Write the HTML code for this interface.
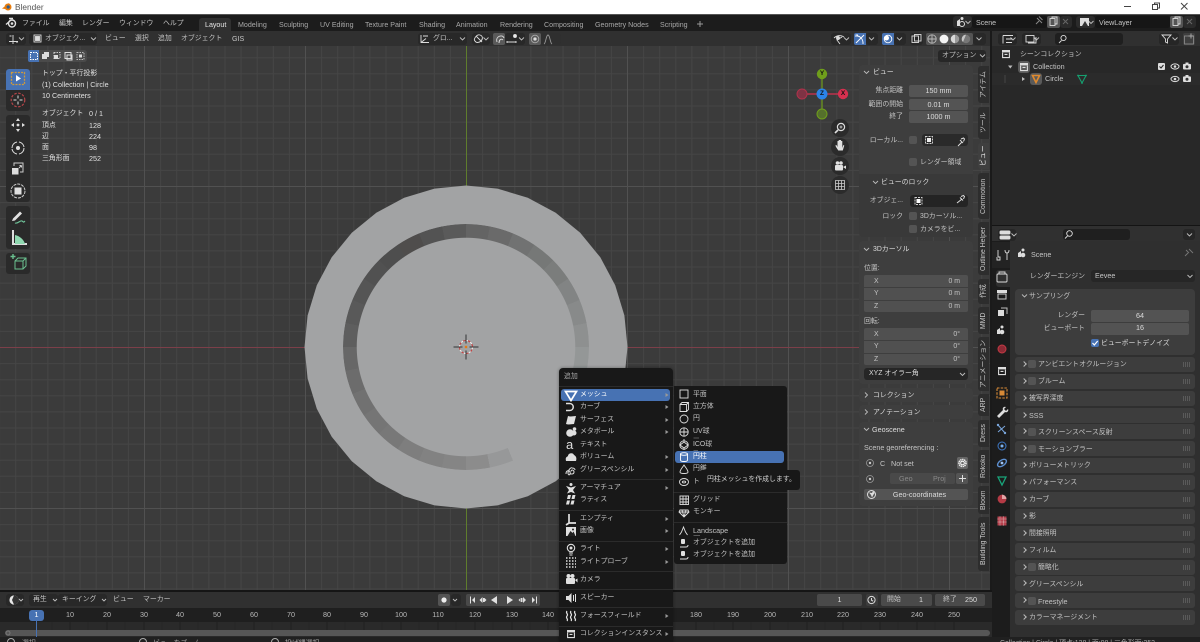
<!DOCTYPE html>
<html lang="ja"><head><meta charset="utf-8"><title>Blender</title>
<style>
html,body{margin:0;padding:0;background:#1a1a1a}
#a{position:relative;width:1200px;height:642px;overflow:hidden;background:#1a1a1a;font:6.9px/12px "Liberation Sans","Noto Sans CJK JP",sans-serif;color:#c4c4c4;filter:blur(.35px)}
#a p{position:absolute;margin:1px 0 0;white-space:nowrap;line-height:12px}
#a i{position:absolute;display:block;font-style:normal}
svg{position:absolute;left:0;top:0}
.w{background:#282828;border-radius:3px}
.f{background:#545454;border-radius:2px}
.h{background:#3e3e3e;border-radius:4px}
.b{background:#2a2a2a;border-radius:3px}
.c{background:#545454;border-radius:2px;width:8px;height:8px}
.g{color:#a8a8a8}
#a p.v{margin:0;writing-mode:vertical-rl;text-orientation:sideways;transform:rotate(180deg);text-align:center;line-height:11px;width:11px;color:#c8c8c8}
.tab{background:#2d2d2d;left:978px;width:11px;border-radius:3px 0 0 3px}
.p{left:1015px;width:180px;height:15px;background:#3d3d3d;border-radius:3px}
.p:before{content:"";position:absolute;left:7px;top:5px;width:3px;height:3px;border-top:1px solid #bbb;border-right:1px solid #bbb;transform:rotate(45deg)}
.p:after{content:"";position:absolute;right:4px;top:5px;width:8px;height:5px;background:repeating-linear-gradient(90deg,#5a5a5a 0 1px,transparent 1px 2px)}
.s{left:559px;width:114px;height:1px;background:#2b2b2b}
.n{text-align:center;width:24px;color:#b8b8b8}
</style></head><body><div id="a">

<svg width="1200" height="642">
<defs><pattern id="gr" x="144" y="25" width="161" height="161" patternUnits="userSpaceOnUse">
<path d="M16.6 0V161M32.7 0V161M48.8 0V161M64.9 0V161M81 0V161M97.1 0V161M113.2 0V161M129.3 0V161M145.4 0V161M0 16.6H161M0 32.7H161M0 48.8H161M0 64.9H161M0 81H161M0 97.1H161M0 113.2H161M0 129.3H161M0 145.4H161" stroke="#454545" stroke-width="1" fill="none"/>
<path d="M.5 0V161M0 .5H161" stroke="#515151" stroke-width="1" fill="none"/></pattern></defs>
<rect x="0" y="31" width="990" height="560" fill="#3b3b3b"/>
<rect x="0" y="46" width="990" height="545" fill="url(#gr)"/>
<path d="M0 347.5H860" stroke="#7c3f49" stroke-width="1"/>
<path d="M466.5 46V591" stroke="#5f7d2d" stroke-width="1"/>
<polygon fill="#a2a3a4" points="466,185.5 497.5,188.6 527.8,197.8 555.7,212.7 580.2,232.8 600.3,257.3 615.2,285.2 624.4,315.5 627.5,347 624.4,378.5 615.2,408.8 600.3,436.7 580.2,461.2 555.7,481.3 527.8,496.2 497.5,505.4 466,508.5 434.5,505.4 404.2,496.2 376.3,481.3 351.8,461.2 331.7,436.7 316.8,408.8 307.6,378.5 304.5,347 307.6,315.5 316.8,285.2 331.7,257.3 351.8,232.8 376.3,212.7 404.2,197.8 434.5,188.6"/>
</svg>
<i style="left:343px;top:224px;width:246px;height:246px;border-radius:50%;background:conic-gradient(#646464 0 11.25deg,#6a6a6a 0 22.5deg,#717272 0 33.75deg,#767877 0 45deg,#7b7d7c 0 56.25deg,#828484 0 67.5deg,#888a8a 0 78.75deg,#8e9090 0 90deg,#949797 0 101.25deg,#9a9d9d 0 112.5deg,#a0a2a3 0 123.75deg,#a2a3a4 0 157.5deg,#979899 0 168.75deg,#8c8c8c 0 180deg,#858585 0 191.25deg,#828282 0 202.5deg,#7e7e7e 0 213.75deg,#787878 0 225deg,#757575 0 236.25deg,#717171 0 247.5deg,#6c6c6c 0 258.75deg,#676767 0 270deg,#5e5e5e 0 281.25deg,#595959 0 292.5deg,#555 0 303.75deg,#515151 0 315deg,#4e4e4e 0 326.25deg,#4f4d4c 0 337.5deg,#535353 0 348.75deg,#5a5a5a 0 360deg);-webkit-mask:radial-gradient(circle,transparent 109px,#000 109.5px);mask:radial-gradient(circle,transparent 109px,#000 109.5px)"></i>

<!-- title bar -->
<i style="left:0;top:0;width:1200px;height:14px;background:#fff"></i>
<i style="left:0;top:14px;width:1200px;height:1px;background:#555"></i>
<p style="left:15px;top:0;font-size:8.3px;color:#555">Blender</p>
<!-- top bar -->
<i style="left:0;top:15px;width:1200px;height:16px;background:#1c1c1c"></i>
<i style="left:199px;top:18px;width:32px;height:13px;background:#303030;border-radius:3px 3px 0 0"></i>
<p style="left:22px;top:17px">ファイル</p><p style="left:59px;top:17px">編集</p><p style="left:82px;top:17px">レンダー</p><p style="left:119px;top:17px">ウィンドウ</p><p style="left:163px;top:17px">ヘルプ</p>
<p style="left:205px;top:18px;color:#e6e6e6;font-size:7.1px">Layout</p>
<p class="g" style="left:238px;top:18px;font-size:7.1px">Modeling</p><p class="g" style="left:279px;top:18px;font-size:7.1px">Sculpting</p><p class="g" style="left:320px;top:18px;font-size:7.1px">UV Editing</p><p class="g" style="left:365px;top:18px;font-size:7.1px">Texture Paint</p><p class="g" style="left:419px;top:18px;font-size:7.1px">Shading</p><p class="g" style="left:456px;top:18px;font-size:7.1px">Animation</p><p class="g" style="left:500px;top:18px;font-size:7.1px">Rendering</p><p class="g" style="left:544px;top:18px;font-size:7.1px">Compositing</p><p class="g" style="left:595px;top:18px;font-size:7.1px">Geometry Nodes</p><p class="g" style="left:660px;top:18px;font-size:7.1px">Scripting</p>

<i class="w" style="left:953px;top:16px;width:19px;height:12px;background:#2b2b2b"></i>
<i class="w" style="left:972px;top:16px;width:75px;height:12px;background:#161616"></i>
<i class="f" style="left:1047px;top:16px;width:13px;height:12px"></i><i class="w" style="left:1060px;top:16px;width:12px;height:12px;background:#2b2b2b"></i>
<p style="left:976px;top:16px;font-size:7.1px">Scene</p>
<i class="w" style="left:1076px;top:16px;width:19px;height:12px;background:#2b2b2b"></i>
<i class="w" style="left:1095px;top:16px;width:75px;height:12px;background:#161616"></i>
<i class="f" style="left:1170px;top:16px;width:13px;height:12px"></i><i class="w" style="left:1183px;top:16px;width:13px;height:12px;background:#2b2b2b"></i>
<p style="left:1099px;top:16px;font-size:7.1px">ViewLayer</p>

<!-- viewport header -->
<i style="left:0;top:31px;width:990px;height:15px;background:#303030"></i>
<i class="w" style="left:6px;top:33px;width:20px;height:12px"></i>
<i class="w" style="left:29px;top:33px;width:68px;height:12px"></i>
<p style="left:45px;top:32px">オブジェク...</p>
<p style="left:105px;top:32px">ビュー</p><p style="left:135px;top:32px">選択</p><p style="left:158px;top:32px">追加</p><p style="left:181px;top:32px">オブジェクト</p><p style="left:232px;top:32px;font-size:7.1px">GIS</p>
<i class="w" style="left:418px;top:33px;width:49px;height:12px"></i><p style="left:433px;top:32px">グロ...</p>
<i class="w" style="left:472px;top:33px;width:18px;height:12px"></i>
<i class="f" style="left:493px;top:33px;width:12px;height:12px;background:#5a5a5a"></i><i class="w" style="left:505px;top:33px;width:20px;height:12px"></i>
<i class="f" style="left:529px;top:33px;width:12px;height:12px;background:#5a5a5a"></i><i class="w" style="left:541px;top:33px;width:20px;height:12px;background:#2f2f2f"></i>
<i class="w" style="left:831px;top:33px;width:20px;height:12px"></i>
<i style="left:854px;top:33px;width:12px;height:12px;background:#4772b3;border-radius:2px 0 0 2px"></i><i class="w" style="left:866px;top:33px;width:12px;height:12px"></i>
<i style="left:882px;top:33px;width:12px;height:12px;background:#4772b3;border-radius:2px 0 0 2px"></i><i class="w" style="left:894px;top:33px;width:12px;height:12px"></i>
<i class="w" style="left:910px;top:33px;width:13px;height:12px"></i>
<i class="f" style="left:926px;top:33px;width:47px;height:12px"></i>
<i class="w" style="left:973px;top:33px;width:13px;height:12px"></i>
<i class="w" style="left:938px;top:50px;width:48px;height:12px;background:#272727"></i>
<p style="left:942px;top:49px">オプション</p>

<!-- tool settings -->
<i class="b" style="left:28px;top:50px;width:59px;height:12px;background:#4a4a4a"></i>
<i style="left:28px;top:50px;width:11px;height:12px;background:#4772b3;border-radius:2px 0 0 2px"></i>

<!-- toolbar -->
<i class="b" style="left:6px;top:69px;width:24px;height:42px"></i>
<i style="left:6px;top:69px;width:24px;height:21px;background:#4772b3;border-radius:3px 3px 0 0"></i>
<i class="b" style="left:6px;top:115px;width:24px;height:87px"></i>
<i class="b" style="left:6px;top:206px;width:24px;height:43px"></i>
<i class="b" style="left:6px;top:253px;width:24px;height:21px"></i>

<!-- stats -->
<p style="left:42px;top:67px;color:#e0e0e0">トップ・平行投影</p>
<p style="left:42px;top:78px;color:#e0e0e0;font-size:7.2px">(1) Collection | Circle</p>
<p style="left:42px;top:89px;color:#e0e0e0;font-size:7.2px">10 Centimeters</p>
<p style="left:42px;top:107px;color:#e0e0e0">オブジェクト</p><p style="left:89px;top:107px;color:#e0e0e0;font-size:7.2px">0 / 1</p>
<p style="left:42px;top:119px;color:#e0e0e0">頂点</p><p style="left:89px;top:119px;color:#e0e0e0;font-size:7.2px">128</p>
<p style="left:42px;top:130px;color:#e0e0e0">辺</p><p style="left:89px;top:130px;color:#e0e0e0;font-size:7.2px">224</p>
<p style="left:42px;top:141px;color:#e0e0e0">面</p><p style="left:89px;top:141px;color:#e0e0e0;font-size:7.2px">98</p>
<p style="left:42px;top:152px;color:#e0e0e0">三角形面</p><p style="left:89px;top:152px;color:#e0e0e0;font-size:7.2px">252</p>

<!-- sidebar tabs -->
<i class="tab" style="top:66px;height:37px"></i><p class="v" style="left:978px;top:66px;height:37px">アイテム</p>
<i class="tab" style="top:107px;height:32px"></i><p class="v" style="left:978px;top:107px;height:32px">ツール</p>
<i class="tab" style="top:143px;height:26px;background:#3f3f3f"></i><p class="v" style="left:978px;top:143px;height:26px;color:#eee">ビュー</p>
<i class="tab" style="top:173px;height:46px"></i><p class="v" style="left:978px;top:173px;height:46px">Commotion</p>
<i class="tab" style="top:222px;height:53px"></i><p class="v" style="left:978px;top:222px;height:53px">Outline Helper</p>
<i class="tab" style="top:279px;height:25px"></i><p class="v" style="left:978px;top:279px;height:25px">作成</p>
<i class="tab" style="top:307px;height:27px"></i><p class="v" style="left:978px;top:307px;height:27px">MMD</p>
<i class="tab" style="top:337px;height:54px"></i><p class="v" style="left:978px;top:337px;height:54px">アニメーション</p>
<i class="tab" style="top:394px;height:22px"></i><p class="v" style="left:978px;top:394px;height:22px">ARP</p>
<i class="tab" style="top:420px;height:27px"></i><p class="v" style="left:978px;top:420px;height:27px">Dress</p>
<i class="tab" style="top:450px;height:33px"></i><p class="v" style="left:978px;top:450px;height:33px">Rokoko</p>
<i class="tab" style="top:486px;height:28px"></i><p class="v" style="left:978px;top:486px;height:28px">Bloom</p>
<i class="tab" style="top:517px;height:54px"></i><p class="v" style="left:978px;top:517px;height:54px">Building Tools</p>

<!-- sidebar panels -->
<i class="h" style="left:859px;top:65px;width:114px;height:172px"></i>
<i style="left:859px;top:174px;width:114px;height:63px;background:#393939;border-radius:0 0 4px 4px"></i>
<i class="h" style="left:859px;top:241px;width:114px;height:143px"></i>
<i class="h" style="left:859px;top:388px;width:114px;height:14px"></i>
<i class="h" style="left:859px;top:405px;width:114px;height:14px"></i>
<i class="h" style="left:859px;top:422px;width:114px;height:84px"></i>

<p style="left:873px;top:66px;color:#ddd">ビュー</p>
<p style="right:297px;top:84px">焦点距離</p><i class="f" style="left:909px;top:85px;width:59px;height:12px"></i><p style="left:909px;top:84px;width:59px;text-align:center;font-size:7.2px;color:#ddd">150 mm</p>
<p style="right:297px;top:98px">範囲の開始</p><i class="f" style="left:909px;top:99px;width:59px;height:11px"></i><p style="left:909px;top:98px;width:59px;text-align:center;font-size:7.2px;color:#ddd">0.01 m</p>
<p style="right:297px;top:110px">終了</p><i class="f" style="left:909px;top:111px;width:59px;height:12px"></i><p style="left:909px;top:110px;width:59px;text-align:center;font-size:7.2px;color:#ddd">1000 m</p>
<p style="right:297px;top:134px">ローカル...</p><i class="c" style="left:909px;top:136px"></i><i class="w" style="left:922px;top:134px;width:46px;height:12px;background:#2a2a2a"></i>
<i class="c" style="left:909px;top:158px"></i><p style="left:920px;top:156px">レンダー領域</p>
<p style="left:881px;top:176px;color:#ddd">ビューのロック</p>
<p style="right:297px;top:194px">オブジェ...</p><i class="w" style="left:910px;top:195px;width:58px;height:12px;background:#242424"></i>
<p style="right:297px;top:210px">ロック</p><i class="c" style="left:909px;top:212px"></i><p style="left:920px;top:210px">3Dカーソル...</p>
<i class="c" style="left:909px;top:225px"></i><p style="left:920px;top:223px">カメラをビ...</p>
<p style="left:873px;top:243px;color:#ddd">3Dカーソル</p>
<p style="left:864px;top:262px">位置:</p>
<i class="f" style="left:864px;top:275px;width:104px;height:37px;background:#505050"></i>
<i style="left:864px;top:287px;width:104px;height:1px;background:#3e3e3e"></i><i style="left:864px;top:300px;width:104px;height:1px;background:#3e3e3e"></i>
<p style="left:874px;top:275px">X</p><p style="right:240px;top:275px">0 m</p><p style="left:874px;top:287px">Y</p><p style="right:240px;top:287px">0 m</p><p style="left:874px;top:300px">Z</p><p style="right:240px;top:300px">0 m</p>
<p style="left:864px;top:315px">回転:</p>
<i class="f" style="left:864px;top:328px;width:104px;height:37px;background:#505050"></i>
<i style="left:864px;top:340px;width:104px;height:1px;background:#3e3e3e"></i><i style="left:864px;top:353px;width:104px;height:1px;background:#3e3e3e"></i>
<p style="left:874px;top:328px">X</p><p style="right:240px;top:328px">0°</p><p style="left:874px;top:340px">Y</p><p style="right:240px;top:340px">0°</p><p style="left:874px;top:353px">Z</p><p style="right:240px;top:353px">0°</p>
<i class="w" style="left:864px;top:368px;width:104px;height:12px;background:#262626"></i><p style="left:869px;top:367px;color:#ddd">XYZ オイラー角</p>
<p style="left:873px;top:389px;color:#ddd">コレクション</p>
<p style="left:873px;top:406px;color:#ddd">アノテーション</p>
<p style="left:872px;top:423px;color:#ddd;font-size:7.2px">Geoscene</p>
<p style="left:864px;top:441px;font-size:7.2px">Scene georeferencing :</p>
<p style="left:880px;top:457px;font-size:7.2px">C</p><p style="left:891px;top:457px;font-size:7.2px">Not set</p>
<i class="f" style="left:957px;top:457px;width:11px;height:12px;background:#666"></i>
<i class="f" style="left:890px;top:473px;width:65px;height:11px;background:#494949"></i>
<i class="f" style="left:956px;top:473px;width:12px;height:11px"></i>
<p style="left:899px;top:472px;color:#888;font-size:7.2px">Geo</p><p style="left:933px;top:472px;color:#888;font-size:7.2px">Proj</p>
<i class="f" style="left:864px;top:489px;width:104px;height:11px"></i>
<p style="left:864px;top:488px;width:104px;text-align:center;padding-left:7px;box-sizing:border-box;color:#ddd;font-size:7.2px">Geo-coordinates</p>

<!-- outliner -->
<i style="left:990px;top:31px;width:210px;height:195px;background:#1a1a1a"></i>
<i style="left:992px;top:31px;width:208px;height:194px;background:#282828"></i>
<i style="left:992px;top:31px;width:208px;height:15px;background:#303030"></i>
<i class="w" style="left:998px;top:33px;width:19px;height:12px;background:#262626"></i>
<i class="w" style="left:1022px;top:33px;width:19px;height:12px;background:#262626"></i>
<i class="w" style="left:1055px;top:33px;width:68px;height:12px;background:#1f1f1f"></i>
<i class="w" style="left:1159px;top:33px;width:20px;height:12px;background:#262626"></i>
<i class="f" style="left:1183px;top:33px;width:12px;height:12px;background:#3f3f3f"></i>
<i style="left:992px;top:73px;width:208px;height:12px;background:#2b2b2b"></i>
<p style="left:1020px;top:48px">シーンコレクション</p>
<i class="f" style="left:1018px;top:61px;width:12px;height:12px;background:#5a5a5a;border-radius:3px"></i>
<p style="left:1033px;top:60px;font-size:7.2px">Collection</p>
<i class="f" style="left:1030px;top:73px;width:12px;height:12px;background:#5a5a5a;border-radius:3px"></i>
<p style="left:1045px;top:72px;font-size:7.2px">Circle</p>

<!-- properties -->
<i style="left:992px;top:225px;width:208px;height:1px;background:#141414"></i>
<i style="left:992px;top:226px;width:208px;height:15px;background:#303030"></i>
<i style="left:992px;top:241px;width:18px;height:396px;background:#1c1c1c"></i>
<i style="left:1010px;top:241px;width:190px;height:396px;background:#2f2f2f"></i>
<i style="left:996px;top:270px;width:14px;height:17px;background:#2f2f2f;border-radius:3px 0 0 3px"></i>
<i style="left:992px;top:242px;width:18px;height:26px;background:#232323"></i>
<i class="w" style="left:998px;top:229px;width:18px;height:12px;background:#262626"></i>
<i class="w" style="left:1063px;top:229px;width:67px;height:11px;background:#1f1f1f"></i>
<i class="w" style="left:1183px;top:229px;width:12px;height:11px;background:#262626"></i>
<p style="left:1031px;top:248px;font-size:7.2px">Scene</p>
<p style="right:115px;top:270px">レンダーエンジン</p><i class="w" style="left:1091px;top:270px;width:104px;height:12px;background:#262626"></i><p style="left:1095px;top:269px;font-size:7.2px">Eevee</p>
<i class="h" style="left:1015px;top:289px;width:180px;height:66px;background:#3d3d3d"></i>
<p style="left:1029px;top:290px">サンプリング</p>
<p style="right:115px;top:309px">レンダー</p><i class="f" style="left:1091px;top:310px;width:98px;height:12px;background:#535353"></i><p style="left:1091px;top:309px;width:98px;text-align:center;font-size:7.2px;color:#ddd">64</p>
<p style="right:115px;top:322px">ビューポート</p><i class="f" style="left:1091px;top:323px;width:98px;height:12px;background:#535353"></i><p style="left:1091px;top:321px;width:98px;text-align:center;font-size:7.2px;color:#ddd">16</p>
<i class="c" style="left:1091px;top:339px;background:#4772b3"></i><p style="left:1101px;top:337px;color:#ddd">ビューポートデノイズ</p>

<i class="p" style="top:357px"></i><i class="c" style="left:1028px;top:360px"></i><p style="left:1038px;top:358px">アンビエントオクルージョン</p>
<i class="p" style="top:374px"></i><i class="c" style="left:1028px;top:377px"></i><p style="left:1038px;top:375px">ブルーム</p>
<i class="p" style="top:391px"></i><p style="left:1029px;top:392px">被写界深度</p>
<i class="p" style="top:408px"></i><p style="left:1029px;top:409px;font-size:7.2px">SSS</p>
<i class="p" style="top:424px"></i><i class="c" style="left:1028px;top:428px"></i><p style="left:1038px;top:426px">スクリーンスペース反射</p>
<i class="p" style="top:441px"></i><i class="c" style="left:1028px;top:445px"></i><p style="left:1038px;top:443px">モーションブラー</p>
<i class="p" style="top:458px"></i><p style="left:1029px;top:459px">ボリューメトリック</p>
<i class="p" style="top:475px"></i><p style="left:1029px;top:476px">パフォーマンス</p>
<i class="p" style="top:492px"></i><p style="left:1029px;top:493px">カーブ</p>
<i class="p" style="top:509px"></i><p style="left:1029px;top:510px">影</p>
<i class="p" style="top:526px"></i><p style="left:1029px;top:527px">間接照明</p>
<i class="p" style="top:543px"></i><p style="left:1029px;top:544px">フィルム</p>
<i class="p" style="top:560px"></i><i class="c" style="left:1028px;top:563px"></i><p style="left:1038px;top:561px">簡略化</p>
<i class="p" style="top:576px"></i><p style="left:1029px;top:578px">グリースペンシル</p>
<i class="p" style="top:593px"></i><i class="c" style="left:1028px;top:597px"></i><p style="left:1038px;top:595px;font-size:7.2px">Freestyle</p>
<i class="p" style="top:610px"></i><p style="left:1029px;top:611px">カラーマネージメント</p>

<!-- timeline -->
<i style="left:0;top:590px;width:992px;height:2px;background:#151515"></i>
<i style="left:0;top:592px;width:992px;height:16px;background:#303030"></i>
<i style="left:0;top:608px;width:992px;height:14px;background:#1f1f1f"></i>
<i style="left:0;top:622px;width:992px;height:15px;background:#2a2a2a"></i>
<i style="left:5px;top:630px;width:985px;height:6px;background:#565656;border-radius:3px"></i>
<i style="left:0;top:637px;width:1200px;height:5px;background:#202020"></i>
<i class="w" style="left:6px;top:594px;width:18px;height:12px;background:#282828"></i>
<i class="w" style="left:29px;top:594px;width:29px;height:12px"></i><i class="w" style="left:58px;top:594px;width:49px;height:12px"></i>
<p style="left:33px;top:593px">再生</p><p style="left:62px;top:593px">キーイング</p><p style="left:113px;top:593px">ビュー</p><p style="left:143px;top:593px">マーカー</p>
<i class="f" style="left:438px;top:594px;width:12px;height:12px"></i>
<i class="w" style="left:451px;top:594px;width:10px;height:12px"></i>
<i class="f" style="left:466px;top:594px;width:74px;height:12px;background:#494949"></i>
<i class="f" style="left:817px;top:594px;width:45px;height:12px;background:#4a4a4a"></i><p style="left:817px;top:593px;width:45px;text-align:center;font-size:7.2px;color:#ddd">1</p>
<i class="f" style="left:866px;top:594px;width:12px;height:12px;background:#3c3c3c"></i>
<i class="f" style="left:881px;top:594px;width:51px;height:12px;background:#4a4a4a"></i><p style="left:887px;top:593px">開始</p><p style="left:919px;top:593px;font-size:7.2px;color:#ddd">1</p>
<i class="f" style="left:935px;top:594px;width:50px;height:12px;background:#4a4a4a"></i><p style="left:943px;top:593px">終了</p><p style="left:965px;top:593px;font-size:7.2px;color:#ddd">250</p>

<i style="left:29px;top:610px;width:15px;height:11px;background:#4772b3;border-radius:3px"></i>
<p style="left:29px;top:608px;width:15px;text-align:center;color:#fff;font-size:7.2px">1</p>
<p class="n" style="left:58px;top:608px;font-size:7.2px">10</p><p class="n" style="left:95px;top:608px;font-size:7.2px">20</p><p class="n" style="left:132px;top:608px;font-size:7.2px">30</p><p class="n" style="left:168px;top:608px;font-size:7.2px">40</p><p class="n" style="left:205px;top:608px;font-size:7.2px">50</p><p class="n" style="left:242px;top:608px;font-size:7.2px">60</p><p class="n" style="left:279px;top:608px;font-size:7.2px">70</p><p class="n" style="left:315px;top:608px;font-size:7.2px">80</p><p class="n" style="left:352px;top:608px;font-size:7.2px">90</p><p class="n" style="left:389px;top:608px;font-size:7.2px">100</p><p class="n" style="left:426px;top:608px;font-size:7.2px">110</p><p class="n" style="left:463px;top:608px;font-size:7.2px">120</p><p class="n" style="left:500px;top:608px;font-size:7.2px">130</p><p class="n" style="left:536px;top:608px;font-size:7.2px">140</p>
<p class="n" style="left:684px;top:608px;font-size:7.2px">180</p><p class="n" style="left:721px;top:608px;font-size:7.2px">190</p><p class="n" style="left:758px;top:608px;font-size:7.2px">200</p><p class="n" style="left:795px;top:608px;font-size:7.2px">210</p><p class="n" style="left:831px;top:608px;font-size:7.2px">220</p><p class="n" style="left:868px;top:608px;font-size:7.2px">230</p><p class="n" style="left:905px;top:608px;font-size:7.2px">240</p><p class="n" style="left:942px;top:608px;font-size:7.2px">250</p>

<!-- status -->
<p style="left:22px;top:637px;color:#aaa">選択</p><p style="left:153px;top:637px;color:#aaa">ビューをズーム</p><p style="left:285px;top:637px;color:#aaa">投げ縄選択</p>
<p style="left:1000px;top:637px;color:#aaa">Collection | Circle | 頂点:128 | 面:98 | 三角形面:252</p>

<!-- popup menu -->
<i style="left:559px;top:368px;width:114px;height:274px;background:#181818;border-radius:4px 4px 0 0;box-shadow:0 0 3px #0006"></i>
<p class="g" style="left:564px;top:370px">追加</p>
<i class="s" style="top:386px"></i>
<i style="left:561px;top:389px;width:109px;height:12px;background:#4772b3;border-radius:3px"></i>
<p style="left:580px;top:388px;color:#fff">メッシュ</p>
<p style="left:580px;top:400px">カーブ</p><p style="left:580px;top:413px">サーフェス</p><p style="left:580px;top:425px">メタボール</p><p style="left:580px;top:438px">テキスト</p><p style="left:580px;top:450px">ボリューム</p><p style="left:580px;top:463px">グリースペンシル</p>
<i class="s" style="top:479px"></i>
<p style="left:580px;top:481px">アーマチュア</p><p style="left:580px;top:493px">ラティス</p>
<i class="s" style="top:510px"></i>
<p style="left:580px;top:512px">エンプティ</p><p style="left:580px;top:524px">画像</p>
<i class="s" style="top:541px"></i>
<p style="left:580px;top:542px">ライト</p><p style="left:580px;top:555px">ライトプローブ</p>
<i class="s" style="top:571px"></i>
<p style="left:580px;top:573px">カメラ</p>
<i class="s" style="top:589px"></i>
<p style="left:580px;top:591px">スピーカー</p>
<i class="s" style="top:607px"></i>
<p style="left:580px;top:609px">フォースフィールド</p>
<i class="s" style="top:626px"></i>
<p style="left:580px;top:627px">コレクションインスタンス</p>
<p style="left:566px;top:438px;font-size:13px;color:#ddd">a</p>

<!-- submenu -->
<i style="left:674px;top:386px;width:113px;height:178px;background:#181818;border-radius:0 3px 3px 3px"></i>
<p style="left:693px;top:388px">平面</p><p style="left:693px;top:400px">立方体</p><p style="left:693px;top:412px">円</p><p style="left:693px;top:425px">UV球</p><p style="left:693px;top:438px">ICO球</p>
<i style="left:675px;top:451px;width:109px;height:12px;background:#4772b3;border-radius:3px"></i>
<p style="left:693px;top:450px;color:#fff">円柱</p>
<p style="left:693px;top:462px">円錐</p><p style="left:693px;top:475px">トーラス</p>
<i style="left:674px;top:492px;width:113px;height:1px;background:#2b2b2b"></i>
<p style="left:693px;top:493px">グリッド</p><p style="left:693px;top:505px">モンキー</p>
<i style="left:674px;top:522px;width:113px;height:1px;background:#2b2b2b"></i>
<p style="left:693px;top:524px;font-size:7.2px">Landscape</p><p style="left:693px;top:536px">オブジェクトを追加</p><p style="left:693px;top:548px">オブジェクトを追加</p>
<i style="left:699px;top:470px;width:101px;height:20px;background:#181818;border-radius:3px"></i>
<p style="left:707px;top:473px;color:#d0d0d0">円柱メッシュを作成します。</p>

<!-- icons -->
<svg width="1200" height="642">
<defs>
<g id="eye"><ellipse cx="0" cy="0" rx="4" ry="2.6" fill="none" stroke="#ddd"/><circle r="1.3" fill="#ddd"/></g>
<g id="cam"><rect x="-4" y="-2.6" width="8" height="5.6" rx="1" fill="#ddd"/><rect x="-1.5" y="-4" width="3" height="2" fill="#ddd"/><circle cy=".2" r="1.5" fill="#333"/></g>
<g id="box"><rect x="-4" y="-4" width="8" height="2.4" fill="#ddd"/><path d="M-3.4-1.4V3.6H3.4V-1.4M-1.5.4H1.5" fill="none" stroke="#ddd" stroke-width="1.1"/></g>
</defs>

<!-- window controls -->
<g stroke="#444" fill="none"><path d="M1124 6.5h7"/><rect x="1152.5" y="4.5" width="5" height="5"/><path d="M1154.5 4.5v-1.500h5v5h-1.500" /><path d="M1181 3l6.500 6.500M1187.500 3L1181 9.500"/></g>
<!-- title logo -->
<g fill="#e87d0d"><circle cx="8" cy="7" r="3.500"/><path d="M2 8.500L6 5.500 9 3 10 5 5 9z"/></g><circle cx="8.200" cy="7" r="1.600" fill="#2a5d92"/>
<!-- blender menu logo -->
<g fill="none" stroke="#e0e0e0" stroke-width="1.400"><circle cx="12" cy="23.500" r="3.500"/><path d="M6 24.500L10 21M9 18.500h4"/></g><circle cx="12" cy="23.500" r="1.300" fill="#e0e0e0"/>
<path d="M697 24h6M700 21v6" stroke="#999" fill="none"/>

<!-- chevrons -->
<path fill="none" stroke="#c0c0c0" stroke-width=".9" d="M19 37.500l2.500 2.500 2.500-2.500M91 37.500l2.500 2.500 2.500-2.500M460 37.500l2.500 2.500 2.500-2.500M483.500 37.500l2.500 2.500 2.500-2.500M519 37.500l2.500 2.500 2.500-2.500M844 37.500l2.500 2.500 2.500-2.500M869 37.500l2.500 2.500 2.500-2.500M897 37.500l2.500 2.500 2.500-2.500M976.500 37.500l2.500 2.500 2.500-2.500M980 54.500l2.500 2.500 2.500-2.500M965.500 21l2.500 2.500 2.500-2.500M1088.500 21l2.500 2.500 2.500-2.500M1010.500 37.500l2.500 2.500 2.500-2.500M1034 37.500l2.500 2.500 2.500-2.500M1172.500 37.500l2.500 2.500 2.500-2.500M1011.500 233.500l2.500 2.500 2.500-2.500M1187 233.500l2.500 2.500 2.500-2.500M1187.500 275l2.500 2.500 2.500-2.500M960 373l2.500 2.500 2.500-2.500M53 599l2 2 2-2M102 599l2 2 2-2M19 599l2 2 2-2M453 599l2 2 2-2" />
<!-- panel chevrons -->
<path fill="none" stroke="#bbb" stroke-width=".9" d="M864 71l2.500 2.500 2.500-2.500M873 181l2.500 2.500 2.500-2.500M864 248l2.500 2.500 2.500-2.500M864 428l2.500 2.500 2.500-2.500M1022 294.500l2.500 2.500 2.500-2.500M865 392.500l2.500 2.500-2.500 2.500M865 409.500l2.500 2.500-2.500 2.500"/>

<!-- viewport header icons -->
<g fill="none" stroke="#ddd" stroke-width=".9">
<path d="M9 41.500h9M13 35v9M9.500 36h2M16 42h2"/>
<rect x="34" y="35" width="7" height="7"/><rect x="35.500" y="36.500" width="4" height="4" fill="#ddd"/>
<path d="M421 35v7.500h8M421 42.500l5-4M428 36l-5 0"/>
<path d="M475 41c-2-2 2-7 5-6s3 4 1 6-5 2-6 0z"/><path d="M476 36l6 6"/>
<path d="M497 42c-2-6 6-8 7-4M499 43c0-3 2-5 4-3"/>
<path d="M507 41v2M507 42h9M516 41v2"/><circle cx="515" cy="36" r="1.500" fill="#eee"/>
<circle cx="535" cy="39" r="3.800" stroke="#aaa"/><circle cx="535" cy="39" r="1.200" fill="#ddd"/>
<path d="M544 44c2-1 2-9 4-9s2 8 4 9" stroke="#999"/>
</g>
<!-- right viewport header -->
<g fill="none" stroke="#ddd" stroke-width=".9">
<path d="M834 38c3-3 7-3 10-1"/><path d="M840 44l-3-4 5-3" /><circle cx="838" cy="38" r="1.500" fill="#ddd"/>
<path d="M856 43l8-8M857 36c3 0 6 3 6 7M858 35h-2v2M863 42v2" stroke="#fff"/>
<circle cx="888" cy="39" r="3.800" stroke="#fff"/><circle cx="886.500" cy="38" r="2.500" fill="#fff" stroke="none"/>
<rect x="912" y="36" width="6.500" height="6.500"/><rect x="914.500" y="34.500" width="6.500" height="6.500"/>
<circle cx="932" cy="39" r="4.200" stroke="#bbb"/><path d="M928 39h8M932 35v8" stroke="#bbb"/>
</g>
<circle cx="944" cy="39" r="4.400" fill="#f4f4f4"/>
<circle cx="955" cy="39" r="4.200" fill="#9a9a9a"/><path d="M955 34.800a4.200 4.200 0 0 0 0 8.400z" fill="#d8d8d8"/>
<circle cx="966" cy="39" r="4.200" fill="#777"/><path d="M966 34.800a4.200 4.200 0 0 0-3 7.200z" fill="#c4c4c4"/>

<!-- select mode icons -->
<rect x="30.500" y="52.500" width="7" height="7" fill="none" stroke="#fff" stroke-dasharray="1.500 1"/>
<rect x="42" y="54" width="5" height="5" fill="#ddd"/><rect x="44" y="52" width="5" height="5" fill="#ddd"/>
<rect x="54" y="52.500" width="6" height="6" fill="none" stroke="#ccc" stroke-dasharray="1.500 1"/><rect x="54" y="55" width="4" height="4" fill="#ddd"/>
<rect x="65" y="52.500" width="6" height="6" fill="none" stroke="#ddd"/><rect x="67" y="55" width="5" height="5" fill="none" stroke="#ddd"/>
<rect x="77" y="52.500" width="7" height="7" fill="none" stroke="#bbb" stroke-dasharray="1.500 1"/><rect x="79" y="54.500" width="3" height="3" fill="#ddd"/>

<!-- toolbar icons -->
<rect x="11.500" y="72.500" width="13" height="12" fill="none" stroke="#d09a3a" stroke-width="1.300" stroke-dasharray="2 1.200"/><path d="M16 75l5 3.500-5 3z" fill="#fff"/>
<g fill="none" stroke="#ddd"><circle cx="18" cy="100" r="6.800" stroke="#b8464a" stroke-width="1.200" stroke-dasharray="2.500 1.500"/><path d="M18 95.500v3M18 101.500v3M13.500 100h3M19.500 100h3"/></g>
<g fill="#ddd"><path d="M18 118l2 3h-4zM18 132l2-3h-4zM11 125l3-2v4zM25 125l-3-2v4z"/><circle cx="18" cy="125" r="1.400"/></g>
<g fill="none" stroke="#ddd"><path d="M12 148a6 6 0 0 1 5-6M24 148a6 6 0 0 1-5 6M19 142a6 6 0 0 1 5 5M17 154a6 6 0 0 1-5-5"/></g><circle cx="18" cy="148" r="2" fill="#ddd"/>
<rect x="12" y="168" width="6.500" height="6.500" fill="#ddd"/><path d="M14 166v-3h9v9h-3M19 168l2.500-2.500M21.500 165.500h-2M21.500 165.500v2" fill="none" stroke="#ccc"/>
<circle cx="18" cy="191" r="7" fill="none" stroke="#ccc" stroke-dasharray="3 1"/><rect x="14.500" y="187.500" width="7" height="7" fill="#e0e0e0"/>
<path d="M12 221l1-2.500 7-7 2 2-7 7z" fill="#e0e0e0"/><path d="M15 223c3 1 5-3 7-2s1 2 3 0" fill="none" stroke="#71c79c" stroke-width="1.100"/>
<path d="M13 230v14h14" fill="none" stroke="#ddd" stroke-width="2"/><path d="M15 244v-9c5 1 9 5 10 9z" fill="#8fd8b0"/>
<g fill="none" stroke="#6ac08f" stroke-width="1"><path d="M15 261l3-3h8v8l-3 3h-8zM15 261h8v8M23 261l3-3"/><path d="M13 254v5M10.500 256.500h5" stroke-width="1.400"/></g>

<!-- 3D cursor -->
<circle cx="466" cy="347" r="6.500" fill="none" stroke="#eee" stroke-width="1.100" stroke-dasharray="2.500 2.500"/>
<circle cx="466" cy="347" r="6.500" fill="none" stroke="#c94040" stroke-width="1.100" stroke-dasharray="2.500 2.500" stroke-dashoffset="2.500"/>
<path d="M453.500 347h9M469.500 347h9M466 334.500v9M466 350.500v9" stroke="#333" stroke-width="1"/>
<rect x="464.800" y="345.800" width="2.400" height="2.400" fill="#e57a14"/>

<!-- gizmo -->
<path d="M822 74v40" stroke="#6f9e1b" stroke-width="1.200"/><path d="M802 94h41" stroke="#d6304f" stroke-width="1.200"/>
<circle cx="822" cy="74" r="5.200" fill="#6f9e1b"/><circle cx="822" cy="114" r="5" fill="#55702c" stroke="#6f9e1b"/>
<circle cx="802" cy="94" r="5" fill="#7e3344" stroke="#b0324b"/><circle cx="843" cy="94" r="5.200" fill="#d6304f"/><circle cx="822" cy="94" r="5.500" fill="#2a84ea"/>
<!-- nav gizmos -->
<g fill="#2b2b2b"><circle cx="840" cy="128" r="9"/><circle cx="840" cy="147" r="9"/><circle cx="840" cy="166" r="9"/><circle cx="840" cy="185" r="9"/></g>
<circle cx="841" cy="127" r="3.600" fill="none" stroke="#ddd" stroke-width="1.200"/><path d="M838 130l-3 3" stroke="#ddd" stroke-width="1.600"/><path d="M839.500 127h3M841 125.500v3" stroke="#ddd" stroke-width=".8"/>
<path d="M836 147c-1-2 0-3 1-1l.5 1v-6h1.200v4-5h1.200v5-5h1.200v5-4h1.200v7l1-3 1 .5-1.500 5h-4.500z" fill="#e0e0e0"/>
<rect x="835" y="165" width="8" height="5.500" rx="1" fill="#e0e0e0"/><circle cx="837.500" cy="163" r="1.800" fill="#e0e0e0"/><circle cx="841" cy="163" r="1.800" fill="#e0e0e0"/><path d="M843 167l3-1.500v3.500z" fill="#e0e0e0"/>
<path d="M835.500 180.500h9v9h-9zM835.500 183.500h9M835.500 186.500h9M838.500 180.500v9M841.500 180.500v9" fill="none" stroke="#ccc" stroke-width=".8"/>

<!-- scene icons top -->
<g fill="#ddd"><path d="M957 26v-5l3-2v7z"/><circle cx="962" cy="18.500" r="1.500"/></g><circle cx="962" cy="24" r="2.500" fill="none" stroke="#ddd"/>
<path d="M1036 24l3-3M1037 18l5 5M1039 16.500l3.500 3.500" stroke="#888" fill="none"/>
<g fill="none" stroke="#ddd" stroke-width=".9"><rect x="1050" y="18.500" width="5" height="7"/><path d="M1052 18.500v-1.500h5v7h-2"/><rect x="1173" y="18.500" width="5" height="7"/><path d="M1175 18.500v-1.500h5v7h-2"/></g>
<path d="M1063 19l5 5M1068 19l-5 5M1187 19l5 5M1192 19l-5 5" stroke="#666"/>
<rect x="1080" y="18" width="9" height="8" fill="#ddd"/><path d="M1082 26l3-5 3 5z" fill="#333"/>

<!-- sidebar details -->
<rect x="925.500" y="136.500" width="7" height="7" fill="none" stroke="#ccc" stroke-dasharray="2 1"/><rect x="927" y="138" width="4" height="4" fill="#eee"/>
<rect x="915" y="197.500" width="7" height="7" fill="none" stroke="#ccc" stroke-dasharray="2 1"/><rect x="916.500" y="199" width="4" height="4" fill="#fff"/>
<path d="M958 146l4-4M960 140l3 3M961 139l2.500-1 1 1-1 2.500M957 203l5-4M960 197.500l3 3M961 196.500l2.500-1 1 1-1 2.500" stroke="#ddd" fill="none"/>
<g fill="none" stroke="#999" stroke-width=".8"><circle cx="870" cy="463" r="3.500"/><circle cx="870" cy="479" r="3.500"/></g><circle cx="870" cy="463" r="1.200" fill="#ccc"/><circle cx="870" cy="479" r="1.200" fill="#ccc"/>
<circle cx="962.500" cy="463" r="3.500" fill="none" stroke="#f0f0f0" stroke-width="1.600" stroke-dasharray="1.400 .6"/><circle cx="962.500" cy="463" r="1.800" fill="none" stroke="#fff"/>
<path d="M959 478.500h7M962.500 475v7" stroke="#ddd"/>
<circle cx="871.500" cy="494.500" r="4" fill="none" stroke="#ddd"/><path d="M869 492.500l3 .5 1-2 1.500 2-1.500 2.500-1 2-1-2.500z" fill="#ddd"/>

<!-- outliner icons -->
<g fill="none" stroke="#ddd" stroke-width=".9"><path d="M1003 35.500h10M1003 35.500v8M1006 39h6M1006 42.500h6"/><rect x="1026" y="35.500" width="8" height="6.500"/><path d="M1028 43h8v-6"/>
<circle cx="1063.500" cy="38" r="2.600"/><path d="M1061.500 40.500l-2.500 2.500"/><path d="M1162 35h9l-3.500 4v4l-2-1v-3z"/><rect x="1184.500" y="36" width="9" height="8" stroke="#888"/><path d="M1191 33.500v5M1188.500 36h5" stroke="#aaa"/></g>
<use href="#box" x="1006" y="54"/><use href="#box" x="1024" y="67"/>
<path d="M1008 65.500h4.500l-2.200 3zM1022 77l3 2-3 2z" fill="#bbb"/>
<path d="M1005 75v8" stroke="#444"/>
<path d="M1032.500 75.500h7l-3.500 7z" fill="none" stroke="#e08a2e" stroke-width="1.600"/>
<path d="M1078 75.500h8l-4 7.500z" fill="none" stroke="#16a070" stroke-width="1.100"/>
<g fill="#16a070"><circle cx="1078" cy="75.500" r=".9"/><circle cx="1086" cy="75.500" r=".9"/><circle cx="1082" cy="83" r=".9"/></g>
<rect x="1158" y="63" width="7" height="7" fill="#ddd" rx="1"/><path d="M1159.500 66.500l1.500 1.500 2.500-3" fill="none" stroke="#222"/>
<use href="#eye" x="1175" y="66.500"/><use href="#cam" x="1187" y="66.500"/><use href="#eye" x="1175" y="79"/><use href="#cam" x="1187" y="79"/>

<!-- properties icons -->
<g fill="none" stroke="#ddd" stroke-width=".9">
<rect x="1000" y="231" width="10" height="3" rx="1" fill="#ddd"/><rect x="1000" y="236" width="10" height="3" rx="1" fill="#ddd"/>
<circle cx="1069.500" cy="233.500" r="2.800"/><path d="M1067.500 236l-2.500 2.500"/>
<path d="M1186 250l3 3M1185 256l3-3M1189 249l4 4" stroke="#777"/>
<path d="M998 250v7M998 257h2v3h-3v-3M1005 250c0 2 1 3 2 3s2-1 2-3M1007 253v7"/>
<rect x="997" y="274" width="10" height="8" rx="1"/><path d="M999 274v-2h6v2"/>
</g>
<g fill="#ddd">
<rect x="997" y="290" width="10" height="3"/><path d="M998 294h8v5h-8z" fill="none" stroke="#ccc"/>
<rect x="998" y="310" width="6" height="6"/><path d="M1001 308h6v6" fill="none" stroke="#bbb"/>
<path d="M997 334v-4l3-2v6z"/><circle cx="1002" cy="327" r="1.500"/><circle cx="1002" cy="332" r="2.300"/>
<use href="#box" x="1002" y="371"/>
<path d="M997 416l6-6c-1-2 1-4 3-3l-2 2 2 2 2-2c1 2-1 4-3 3l-6 6z"/>
</g>
<g fill="none"><circle cx="1002" cy="349" r="4" fill="#8c2a35" stroke="#c23a44"/></g>
<rect x="997" y="388" width="10" height="10" fill="none" stroke="#d78a37" stroke-width="1.100" stroke-dasharray="2.500 1.200"/><rect x="999.500" y="390.500" width="5" height="5" fill="#d78a37"/>
<path d="M998 425l7 8M998 432l7-6" stroke="#7aa6dc" fill="none"/><circle cx="998" cy="425" r="1.200" fill="#7aa6dc"/><circle cx="1005" cy="433" r="1.200" fill="#7aa6dc"/>
<circle cx="1002" cy="446" r="4" fill="none" stroke="#3f79c7"/><circle cx="1002" cy="446" r="1.500" fill="#7ab0ee"/>
<ellipse cx="1002" cy="463" rx="5" ry="2.800" transform="rotate(-35 1002 463)" fill="none" stroke="#5d8fd0" stroke-width="1.400"/><circle cx="1002" cy="463" r="1.400" fill="#9cc3f5"/>
<path d="M998 477h8l-4 8z" fill="none" stroke="#18a47a" stroke-width="1.300"/>
<circle cx="1002" cy="499" r="4.400" fill="#b43a45"/><path d="M1002 494.600a4.400 4.400 0 0 1 4.400 4.400h-4.400z" fill="#e4a4a6"/>
<rect x="997.500" y="516.500" width="9" height="9" fill="#b5414d"/><path d="M997.500 519h9M997.500 522h9M1000 516.500v9M1003.500 516.500v9" stroke="#e3c7c7" stroke-width=".8" stroke-dasharray="1 1"/>
<path d="M1018 257v-4l3-2v6z" fill="#ddd"/><circle cx="1023" cy="250" r="1.500" fill="#ddd"/><circle cx="1023" cy="255" r="2.300" fill="#ddd"/>
<path d="M1092.500 343l1.800 2 3.400-4" stroke="#fff" fill="none" stroke-width="1.200"/>

<!-- timeline -->
<circle cx="14" cy="600" r="4.600" fill="#e8e8e8"/><path d="M14 595.400a4.600 4.600 0 0 1 0 9.200l-2-4.600z" fill="#333"/>
<circle cx="444" cy="600" r="2.600" fill="#eee"/>
<g fill="#e0e0e0"><path d="M470 596.500h1v7h-1zM472 600l3-3v6zM479.500 600l3-3v6zM483 598h1.500v4H483zM486.500 600l-2-2v4zM491 600l6-4v8zM507 596l6 4-6 4zM518.500 600l2-2v4zM521 598h1.500v4H521zM523 597l3 3-3 3zM532 597l3 3-3 3zM536 596.500h1v7h-1z"/></g>
<g fill="none" stroke="#ddd"><circle cx="871.500" cy="600" r="3.600"/><path d="M871.500 598v2.200l1.600 1"/></g>
<path d="M36.500 621v16" stroke="#4772b3"/>
<path d="M70 622v8M107 622v8M144 622v8M180 622v8M217 622v8M254 622v8M291 622v8M327 622v8M364 622v8M401 622v8M438 622v8M475 622v8M512 622v8M548 622v8M696 622v8M733 622v8M770 622v8M807 622v8M843 622v8M880 622v8M917 622v8M954 622v8" stroke="#202020"/>
<path d="M52 622v8M88 622v8M125 622v8M162 622v8M198 622v8M235 622v8M272 622v8M309 622v8M345 622v8M382 622v8M419 622v8M456 622v8M493 622v8M530 622v8M714 622v8M751 622v8M788 622v8M825 622v8M861 622v8M898 622v8M935 622v8" stroke="#272727"/>
<circle cx="8" cy="633" r="2" fill="none" stroke="#777"/>
<g fill="none" stroke="#aaa"><circle cx="11" cy="642" r="3.500"/><circle cx="143" cy="642" r="3.500"/><circle cx="275" cy="642" r="3.500"/></g>

<!-- popup icons -->
<path d="M565.500 391.500h11L571 400.500z" fill="none" stroke="#fff" stroke-width="1.700"/>
<path d="M566 403.500h3.500c5 0 5 7 0 7H566" fill="none" stroke="#e0e0e0" stroke-width="1.500"/>
<path d="M568 416c3 1 5 0 8 0l-2 8c-3 0-5 1-8 0z" fill="#e0e0e0"/>
<circle cx="570" cy="433" r="3.800" fill="#e0e0e0"/><circle cx="574.500" cy="429" r="1.800" fill="#e0e0e0"/><circle cx="574" cy="433" r="2.500" fill="#e0e0e0"/>
<path d="M566 461c-1-4 1-4 2-5 0-3 5-4 6-1 2 1 3 3 2 6z" fill="#e0e0e0"/>
<path d="M566 474c0-4 3-4 4-2 1 3-2 4-2 1 0-3 3-6 4-5M572 468c2 0 3 1 3 2M570 473c0 1.500 4 1.500 4-1s-3-2.500-3-.5" fill="none" stroke="#e0e0e0" stroke-width="1"/>
<circle cx="571" cy="484.500" r="1.500" fill="#e0e0e0"/><path d="M566 486l5 1.500 5-1.500-3 4 2 3.500-4-1.500-4 1.500 2-3.500z" fill="#e0e0e0"/>
<path d="M568 495h3l-1 4h-3zM572.500 495h3l-1 4h-3zM567 500.500h3l-1 4h-3zM571.500 500.500h3l-1 4h-3z" fill="#e0e0e0"/>
<path d="M569 514v9M569 523h7M569 523l-3 2" fill="none" stroke="#e0e0e0" stroke-width="1.700"/>
<rect x="566" y="527" width="10" height="9" fill="#e0e0e0"/><path d="M567.500 536l3-5 2 2 1-1.500 2 4.500z" fill="#222"/><circle cx="573" cy="529.500" r="1" fill="#222"/>
<circle cx="571" cy="548" r="3.700" fill="none" stroke="#e0e0e0" stroke-width="1.100"/><path d="M569 553h4M569.500 555h3" stroke="#e0e0e0"/><circle cx="571" cy="548" r="1.500" fill="#e0e0e0"/>
<path d="M566 558l10 0M566 561l10 0M566 564l10 0M566 567l10 0" stroke="#e0e0e0" stroke-width="1.500" stroke-dasharray="1.500 1.500"/>
<rect x="566" y="578" width="9" height="6" rx="1" fill="#e0e0e0"/><circle cx="568.500" cy="576" r="2" fill="#e0e0e0"/><circle cx="572.500" cy="576" r="2" fill="#e0e0e0"/><path d="M575 580l2.500-1.500v4z" fill="#e0e0e0"/>
<path d="M566 596h2.500l3-3v10l-3-3H566z" fill="#e0e0e0"/><path d="M573.500 595v6M575.500 594v8" stroke="#e0e0e0" fill="none"/>
<path d="M567 611c-2 2 2 3 0 5s2 3 0 5M571 611c-2 2 2 3 0 5s2 3 0 5M575 611c-2 2 2 3 0 5s2 3 0 5" fill="none" stroke="#e0e0e0" stroke-width="1.200"/>
<use href="#box" x="571" y="634"/>
<!-- arrows -->
<path d="M665.500 393l3 2-3 2zM665.500 405l3 2-3 2zM665.500 418l3 2-3 2zM665.500 430l3 2-3 2zM665.500 455l3 2-3 2zM665.500 468l3 2-3 2zM665.500 486l3 2-3 2zM665.500 517l3 2-3 2zM665.500 529l3 2-3 2zM665.500 547l3 2-3 2zM665.500 560l3 2-3 2zM665.500 614l3 2-3 2zM665.500 632l3 2-3 2z" fill="#999"/>
<!-- submenu icons -->
<g fill="none" stroke="#e0e0e0" stroke-width=".9">
<rect x="680" y="390" width="8" height="8"/>
<path d="M680 404.500h6.500v7H680zM680 404.500l2-2h6.500v7l-2 2M686.500 404.500l2-2"/>
<circle cx="684" cy="419" r="4"/>
<circle cx="684" cy="432" r="4.200"/><path d="M680 432h8M684 428v8"/>
<circle cx="684" cy="445" r="4.200"/><path d="M680 445l4-3 4 3-4 3zM684 442v-3M684 448v2"/>
<ellipse cx="684" cy="454" rx="3.500" ry="1.300" stroke="#fff"/><path d="M680.500 454v6c0 2 7 2 7 0v-6" stroke="#fff"/>
<path d="M684 465c-2 3-4 5-4 7s8 2 8 0-2-4-4-7z"/>
<ellipse cx="684" cy="482" rx="4.500" ry="3.500"/><ellipse cx="684" cy="482" rx="1.700" ry=".9"/>
<rect x="680" y="496" width="8.500" height="8.500"/><path d="M680 499h8.500M680 502h8.500M683 496v8.500M686 496v8.500"/>
<path d="M680 510h8l1 2-3 3-2 2-2-2-3-3zM682 510l2 7M686 510l-2 7M679.500 512h9"/>
<path d="M679.500 535l2-3 2-5 2 5 2 3" />
</g>
<g fill="#e0e0e0"><rect x="681" y="539" width="4" height="5" rx="1"/><rect x="681" y="551" width="4" height="5" rx="1"/></g>
<path d="M680 547h6c2 0 2-2 2-2M680 559h6c2 0 2-2 2-2" fill="none" stroke="#e0e0e0"/>
<path d="M693.500 535.500H700M693.500 438H699M693.500 450.500H698" stroke="#999" stroke-width=".6"/>
</svg>

<!-- gizmo letters -->
<p style="left:817px;top:67px;width:10px;text-align:center;color:#111;font-weight:bold;font-size:6.5px">Y</p>
<p style="left:838px;top:87px;width:10px;text-align:center;color:#111;font-weight:bold;font-size:6.5px">X</p>
<p style="left:817px;top:87px;width:10px;text-align:center;color:#111;font-weight:bold;font-size:6.5px">Z</p>
</div></body></html>
